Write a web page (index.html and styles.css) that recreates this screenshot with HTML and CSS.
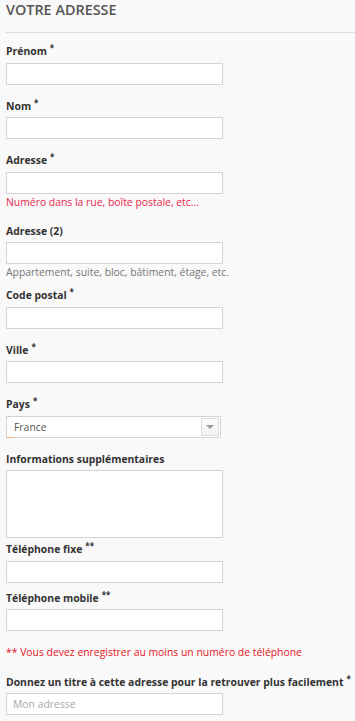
FILE: index.html
```html
<!DOCTYPE html>
<html lang="fr">
<head>
<meta charset="utf-8">
<title>Votre adresse</title>
<link rel="stylesheet" href="styles.css">
</head>
<body>
<div class="page">
  <h1 class="title">Votre adresse</h1>
  <form class="form">
    <div class="field">
      <label class="label">Prénom<sup class="req">*</sup></label>
      <input class="input" type="text">
    </div>
    <div class="field">
      <label class="label">Nom<sup class="req">*</sup></label>
      <input class="input" type="text">
    </div>
    <div class="field">
      <label class="label">Adresse<sup class="req">*</sup></label>
      <input class="input" type="text">
      <span class="hint hint--red">Numéro dans la rue, boîte postale, etc...</span>
    </div>
    <div class="field field--tight">
      <label class="label">Adresse (2)</label>
      <input class="input" type="text">
      <span class="hint hint--grey">Appartement, suite, bloc, bâtiment, étage, etc.</span>
    </div>
    <div class="field">
      <label class="label">Code postal<sup class="req">*</sup></label>
      <input class="input" type="text">
    </div>
    <div class="field">
      <label class="label">Ville<sup class="req">*</sup></label>
      <input class="input" type="text">
    </div>
    <div class="field">
      <label class="label">Pays<sup class="req">*</sup></label>
      <div class="select">
        <span class="select-value">France</span>
        <span class="select-arrow"><span class="tri"></span></span>
        <span class="select-accent"></span>
      </div>
    </div>
    <div class="field field--textarea">
      <label class="label">Informations supplémentaires</label>
      <textarea class="textarea"></textarea>
    </div>
    <div class="field field--tight">
      <label class="label">Téléphone fixe<sup class="req">**</sup></label>
      <input class="input" type="text">
    </div>
    <div class="field field--note">
      <label class="label">Téléphone mobile<sup class="req">**</sup></label>
      <input class="input" type="text">
    </div>
    <p class="note">** Vous devez enregistrer au moins un numéro de téléphone</p>
    <div class="field">
      <label class="label">Donnez un titre à cette adresse pour la retrouver plus facilement<sup class="req">*</sup></label>
      <input class="input" type="text" placeholder="Mon adresse">
    </div>
  </form>
</div>
</body>
</html>
```
FILE: styles.css
```css
html, body {
  margin: 0;
  padding: 0;
  background: #f9f9f9;
}
body {
  font-family: "Open Sans", "DejaVu Sans", sans-serif;
  color: #333;
}
.page {
  padding-left: 6px;
}
.title {
  margin: 0;
  font-size: 14.4px;
  line-height: 20px;
  font-weight: 600;
  color: #555;
  text-transform: uppercase;
  padding-bottom: 12px;
  border-bottom: 1px solid #dcdcdc;
}
.form {
  padding-top: 10px;
}
.field {
  display: flex;
  flex-direction: column;
  align-items: flex-start;
  margin-bottom: 13px;
}
.field--tight {
  margin-bottom: 7px;
}
.field--textarea {
  margin-bottom: 3px;
}
.field--note {
  margin-bottom: 12.5px;
}
.label {
  font-size: 10.4px;
  line-height: 16px;
  font-weight: 700;
  color: #333;
  margin-bottom: 3.5px;
  white-space: nowrap;
}
.req {
  font-size: 8px;
  line-height: 0;
  vertical-align: 0;
  position: relative;
  top: -4px;
  margin-left: 3px;
}
.input {
  width: 217px;
  height: 22px;
  box-sizing: border-box;
  border: 1px solid #d4d4d4;
  background: #fff;
  margin: 0;
  padding: 0 6px;
  font-family: "Open Sans", sans-serif;
  font-size: 10.4px;
  color: #555;
  outline: none;
}
.input::placeholder {
  color: #aaa;
}
.hint {
  font-size: 10.4px;
  line-height: 16px;
}
.hint--red {
  color: #e8264a;
}
.hint--grey {
  color: #777;
}
.select {
  position: relative;
  width: 215px;
  height: 22px;
  box-sizing: border-box;
  border: 1px solid #d4d4d4;
  background: #fff;
  display: flex;
  align-items: center;
}
.select-value {
  flex: 1;
  padding-left: 7px;
  font-size: 10.4px;
  color: #555;
}
.select-arrow {
  width: 18px;
  height: 18px;
  box-sizing: border-box;
  margin-right: 1px;
  border: 1px solid #dcdcdc;
  background: linear-gradient(#fdfdfd, #f1f1f1);
  display: flex;
  align-items: center;
  justify-content: center;
}
.tri {
  width: 0;
  height: 0;
  border-left: 4px solid transparent;
  border-right: 4px solid transparent;
  border-top: 4px solid #9a9a9a;
}
.select-accent {
  position: absolute;
  left: -1px;
  bottom: -1px;
  width: 8px;
  height: 1px;
  background: #f4b27a;
}
.textarea {
  display: block;
  width: 217px;
  height: 68px;
  box-sizing: border-box;
  border: 1px solid #d4d4d4;
  background: #fff;
  margin: 0;
  resize: none;
}
.note {
  margin: 0 0 14px;
  font-size: 10.4px;
  line-height: 16px;
  color: #e8141e;
}
```
